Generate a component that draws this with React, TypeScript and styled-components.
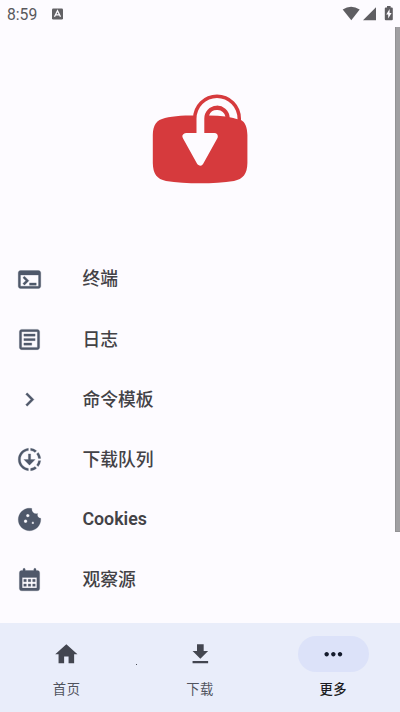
import React from "react";
import styled, { createGlobalStyle } from "styled-components";

const GlobalStyle = createGlobalStyle`
  * { box-sizing: border-box; }
  html, body { margin: 0; padding: 0; background: #fdfbff; }
  body { font-family: Roboto, "Noto Sans CJK SC", sans-serif; overflow: hidden; }
`;

const Screen = styled.div`
  width: 400px;
  height: 712px;
  display: flex;
  flex-direction: column;
  background: #fdfbff;
  overflow: hidden;
`;

const StatusBar = styled.header`
  height: 27px;
  flex: none;
  display: flex;
  align-items: center;
  padding: 0 6px 0 7px;
  color: #626165;
`;

const Clock = styled.span`
  font-size: 15.7px;
  line-height: 27px;
  width: 45px;
  padding-top: 1px;
  color: #59585c;
`;

const StatusIcons = styled.div`
  margin-left: auto;
  display: flex;
  align-items: center;
`;

const Content = styled.main`
  flex: 1;
  min-height: 0;
  display: flex;
`;

const Body = styled.div`
  flex: 1;
`;

const ScrollThumb = styled.div`
  width: 5px;
  height: 505px;
  background: #a09fa2;
  border-left: 1px solid #929194;
  border-bottom: 1px solid #929194;
`;

const LogoArea = styled.div`
  height: 222px;
  padding: 63px 0 0 150px;
`;

const Row = styled.div`
  height: 60.1px;
  display: flex;
  align-items: center;
  padding-left: 16.4px;
`;

const RowIcon = styled.svg`
  width: 27px;
  height: 27px;
  fill: #4f586a;
  stroke: #4f586a;
  stroke-width: 0.25;
  flex: none;
  display: block;
`;

const RowLabel = styled.span<{ $latin: boolean }>`
  margin-left: 39px;
  font-size: 17.8px;
  line-height: 26px;
  font-weight: ${(p) => (p.$latin ? 600 : 500)};
  color: #434246;
  padding-top: ${(p) => (p.$latin ? "0" : "0.8px")};
`;

const NavBar = styled.nav`
  height: 89px;
  flex: none;
  display: grid;
  grid-template-columns: repeat(3, 1fr);
  background: #e9edfa;
  position: relative;
`;

const NavItem = styled.div`
  display: flex;
  flex-direction: column;
  align-items: center;
  padding-top: 13px;
`;

const Pill = styled.div<{ $active?: boolean }>`
  width: 71px;
  height: 36px;
  border-radius: 18px;
  display: flex;
  align-items: center;
  justify-content: center;
  background: ${(p) => (p.$active ? "#dce2f9" : "transparent")};
  svg {
    width: 26.7px;
    height: 26.7px;
    fill: ${(p) => (p.$active ? "#141b2d" : "#434650")};
  }
`;

const NavLabel = styled.span<{ $active?: boolean }>`
  margin-top: 8px;
  font-size: 13.3px;
  line-height: 20px;
  letter-spacing: 0.5px;
  font-weight: ${(p) => (p.$active ? 500 : 400)};
  color: ${(p) => (p.$active ? "#1c1c22" : "#51545e")};
`;

const Speck = styled.i`
  position: absolute;
  left: 136px;
  top: 41px;
  width: 1px;
  height: 1px;
  background: #4a4c55;
`;

const Logo = () => (
  <svg width="100" height="96" viewBox="150 90 100 96">
    <path
      fill="#d63a3d"
      d="M200 115.300C187 115.300 173 116 165 118C156.500 120 153 125 152.800 135V163C153 174 157 179 166 181C176 182.700 188 183.300 200 183.300S224 182.700 234 181C243 179 247.200 174 247.400 163V135C247.200 127 245 122 241 120V118.500A24 24 0 0 0 193 118.500Z"
    />
    <path
      fill="#fdfbff"
      d="M196.500 134V118.500A20.500 20.500 0 0 1 237.500 118.500V119.300Q233 117.600 229.650 117.200A12.700 12.700 0 0 0 204.300 118.500V134Z"
    />
    <path fill="#fdfbff" d="M209 115.400A8.600 8.600 0 0 1 225.400 116.600Q218 115.500 209 115.400Z" />
    <path
      fill="#fdfbff"
      stroke="#fdfbff"
      strokeWidth="7"
      strokeLinejoin="round"
      d="M186 136.600H214.300L200.150 162Z"
    />
  </svg>
);

const Terminal = () => (
  <path d="M20 4H4c-1.110 0-2 .9-2 2v12c0 1.100.89 2 2 2h16c1.100 0 2-.9 2-2V6c0-1.100-.89-2-2-2zm0 14H4V8h16v10zm-2-1h-6v-2h6v2zM7.500 17l-1.410-1.410L8.670 13l-2.590-2.590L7.500 9l4 4-4 4z" />
);
const Article = () => (
  <path d="M19 5v14H5V5h14m0-2H5c-1.100 0-2 .9-2 2v14c0 1.100.9 2 2 2h14c1.100 0 2-.9 2-2V5c0-1.100-.9-2-2-2zm-5 14H7v-2h7v2zm3-4H7v-2h10v2zm0-4H7V7h10v2z" />
);
const Chevron = () => <path d="M10 6 8.590 7.410 13.170 12l-4.580 4.590L10 18l6-6z" />;
const Downloading = () => (
  <path d="M18.320 4.260A9.949 9.949 0 0 0 13 2.050v2.020c1.460.18 2.790.76 3.900 1.620l1.420-1.430zM19.930 11h2.020c-.2-2.010-1-3.840-2.210-5.320L18.310 7.100a7.941 7.941 0 0 1 1.620 3.900zm-1.620 5.900 1.430 1.430A9.981 9.981 0 0 0 21.950 13h-2.020a7.941 7.941 0 0 1-1.620 3.900zM13 19.930v2.020c2.010-.2 3.840-1 5.320-2.210l-1.430-1.430c-1.100.86-2.430 1.440-3.890 1.620zM13 12V7h-2v5H7l5 5 5-5h-4zm-2 7.930v2.020c-5.050-.5-9-4.760-9-9.950s3.950-9.450 9-9.950v2.020C7.050 4.560 4 7.920 4 12s3.050 7.440 7 7.930z" />
);
const Cookie = () => (
  <path d="M21.950 10.990c-1.790-.03-3.700-1.950-2.680-4.220-2.980 1-5.770-1.590-5.190-4.560C6.950.71 2 6.580 2 12c0 5.520 4.480 10 10 10 5.890 0 10.540-5.080 9.950-11.010zM8.500 15c-.83 0-1.500-.67-1.500-1.500S7.670 12 8.500 12s1.500.67 1.500 1.500S9.330 15 8.500 15zm2-5C9.670 10 9 9.330 9 8.500S9.670 7 10.500 7s1.500.67 1.500 1.500-.67 1.500-1.500 1.500zm4.500 6c-.55 0-1-.45-1-1s.45-1 1-1 1 .45 1 1-.45 1-1 1z" />
);
const Calendar = () => (
  <path
    fillRule="evenodd"
    d="M6.200 4V3a1 1 0 0 1 2 0V4H15.800V3a1 1 0 0 1 2 0V4H19Q21 4 21 6V20Q21 22 19 22H5Q3 22 3 20V6Q3 4 5 4ZM5.500 10.200V19.600H18.500V10.200ZM6.900 11.800h2.300v2.200H6.900ZM10.850 11.800h2.300v2.200h-2.300ZM14.800 11.800h2.300v2.200h-2.300ZM6.900 15.900h2.300v2.200H6.900ZM10.850 15.900h2.300v2.200h-2.300ZM14.800 15.900h2.300v2.200h-2.300Z"
  />
);

const rows = [
  { label: "终端", Icon: Terminal },
  { label: "日志", Icon: Article },
  { label: "命令模板", Icon: Chevron },
  { label: "下载队列", Icon: Downloading },
  { label: "Cookies", Icon: Cookie, latin: true },
  { label: "观察源", Icon: Calendar },
];

const tabs = [
  { label: "首页", path: "M10 20v-6h4v6h5v-8h3L12 3 2 12h3v8z" },
  { label: "下载", path: "M5 20h14v-2H5v2zM19 9h-4V3H9v6H5l7 7 7-7z" },
  {
    label: "更多",
    active: true,
    path: "M6 10c-1.100 0-2 .9-2 2s.9 2 2 2 2-.9 2-2-.9-2-2-2zm12 0c-1.100 0-2 .9-2 2s.9 2 2 2 2-.9 2-2-.9-2-2-2zm-6 0c-1.100 0-2 .9-2 2s.9 2 2 2 2-.9 2-2-.9-2-2-2z",
  },
];

export default function App() {
  return (
    <Screen>
      <GlobalStyle />
      <StatusBar>
        <Clock>8:59</Clock>
        <svg width="11" height="12" viewBox="0 0 11 12">
          <rect x="0" y="0.500" width="11" height="11" rx="1.200" fill="#626165" />
          <path d="M2.500 8.700 5.500 2.700 8.500 8.700M3.900 6.900H7.100" fill="none" stroke="#fdfbff" strokeWidth="1.300" />
        </svg>
        <StatusIcons>
          <svg width="52" height="16" viewBox="342 5 52 16" fill="#5f5e62">
            <path d="M342.700 8.600Q351 2.800 359.700 8.600L351.300 19.200Z" />
            <path d="M376 6.300V19.200H363Z" />
            <path d="M387 5h3.600v1.600h1.200q1 0 1 1v10.600q0 1-1 1h-6q-1 0-1-1V7.600q0-1 1-1H387Z" />
            <path fill="#fdfbff" d="M389.600 8 386.200 13.500H388.200V17.500L391.600 12.100H389.600Z" />
          </svg>
        </StatusIcons>
      </StatusBar>
      <Content>
        <Body>
          <LogoArea>
            <Logo />
          </LogoArea>
          {rows.map(({ label, Icon, latin }) => (
            <Row key={label}>
              <RowIcon viewBox="0 0 24 24">
                <Icon />
              </RowIcon>
              <RowLabel $latin={!!latin}>{label}</RowLabel>
            </Row>
          ))}
        </Body>
        <ScrollThumb />
      </Content>
      <NavBar>
        {tabs.map((t) => (
          <NavItem key={t.label}>
            <Pill $active={t.active}>
              <svg viewBox="0 0 24 24">
                <path d={t.path} />
              </svg>
            </Pill>
            <NavLabel $active={t.active}>{t.label}</NavLabel>
          </NavItem>
        ))}
        <Speck />
      </NavBar>
    </Screen>
  );
}
